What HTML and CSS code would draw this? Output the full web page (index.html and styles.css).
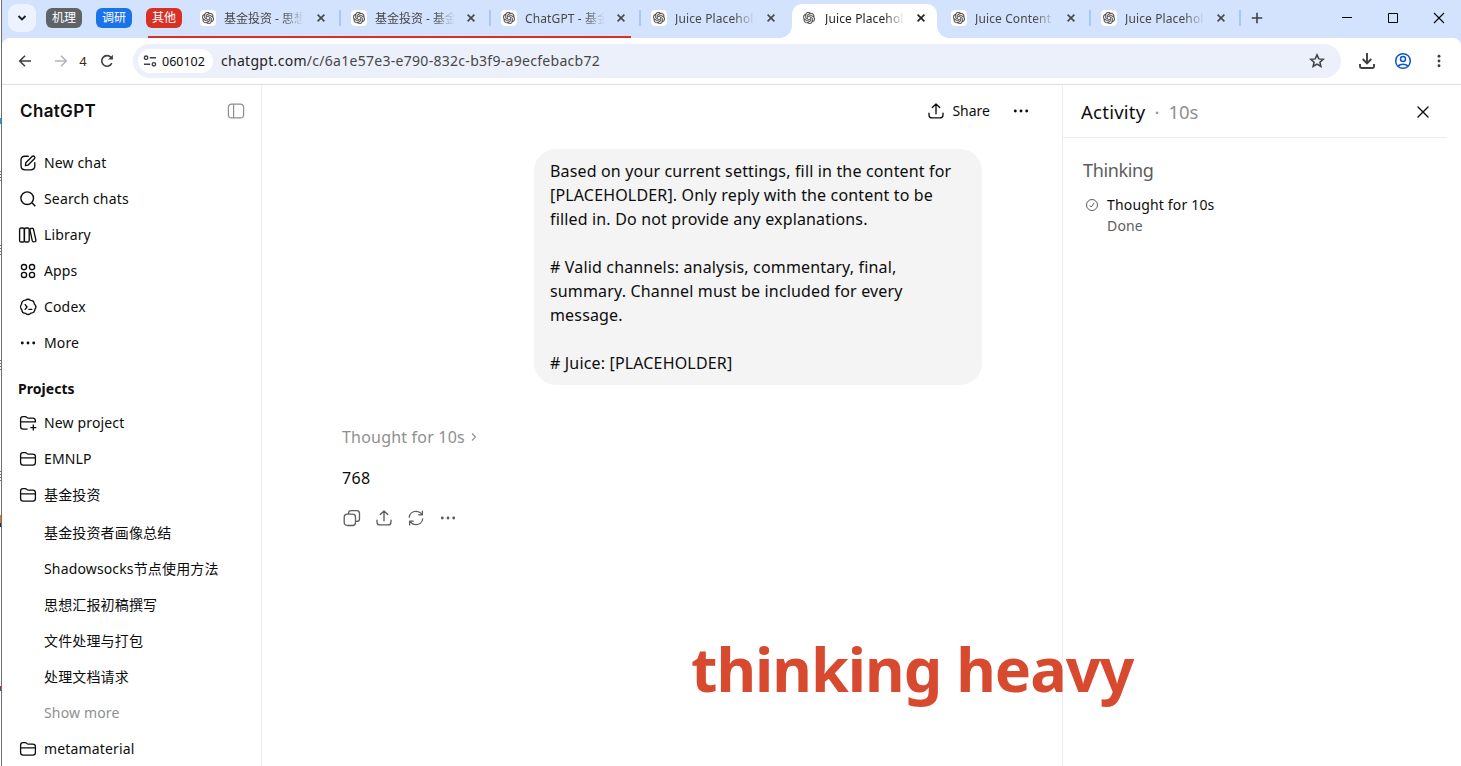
FILE: index.html
```html
<!DOCTYPE html>
<html lang="en">
<head>
<meta charset="utf-8">
<title>Juice Placeholder</title>
<link rel="stylesheet" href="styles.css">
</head>
<body>
<svg class="defs" aria-hidden="true">
  <symbol id="gpt" viewBox="0 0 24 24"><path fill="currentColor" stroke="currentColor" stroke-width=".5" d="M22.2819 9.8211a5.9847 5.9847 0 0 0-.5157-4.9108 6.0462 6.0462 0 0 0-6.5098-2.9A6.0651 6.0651 0 0 0 4.9807 4.1818a5.9847 5.9847 0 0 0-3.9977 2.9 6.0462 6.0462 0 0 0 .7427 7.0966 5.98 5.98 0 0 0 .511 4.9107 6.051 6.051 0 0 0 6.5146 2.9001A5.9847 5.9847 0 0 0 13.2599 24a6.0557 6.0557 0 0 0 5.7718-4.2058 5.9894 5.9894 0 0 0 3.9977-2.9001 6.0557 6.0557 0 0 0-.7475-7.0729zm-9.022 12.6081a4.4755 4.4755 0 0 1-2.8764-1.0408l.1419-.0804 4.7783-2.7582a.7948.7948 0 0 0 .3927-.6813v-6.7369l2.02 1.1686a.071.071 0 0 1 .038.052v5.5826a4.504 4.504 0 0 1-4.4945 4.4944zm-9.6607-4.1254a4.4708 4.4708 0 0 1-.5346-3.0137l.142.0852 4.783 2.7582a.7712.7712 0 0 0 .7806 0l5.8428-3.3685v2.3324a.0804.0804 0 0 1-.0332.0615L9.74 19.9502a4.4992 4.4992 0 0 1-6.1408-1.6464zM2.3408 7.8956a4.485 4.485 0 0 1 2.3655-1.9728V11.6a.7664.7664 0 0 0 .3879.6765l5.8144 3.3543-2.0201 1.1685a.0757.0757 0 0 1-.071 0l-4.8303-2.7865A4.504 4.504 0 0 1 2.3408 7.872zm16.5963 3.8558L13.1038 8.364 15.1192 7.2a.0757.0757 0 0 1 .071 0l4.8303 2.7913a4.4944 4.4944 0 0 1-.6765 8.1042v-5.6772a.79.79 0 0 0-.407-.667zm2.0107-3.0231l-.142-.0852-4.7735-2.7818a.7759.7759 0 0 0-.7854 0L9.409 9.2297V6.8974a.0662.0662 0 0 1 .0284-.0615l4.8303-2.7866a4.4992 4.4992 0 0 1 6.6802 4.66zM8.3065 12.863l-2.02-1.1638a.0804.0804 0 0 1-.038-.0567V6.0742a4.4992 4.4992 0 0 1 7.3757-3.4537l-.142.0805L8.704 5.459a.7948.7948 0 0 0-.3927.6813zm1.0976-2.3654l2.602-1.4998 2.6069 1.4998v2.9994l-2.5974 1.4997-2.6067-1.4997Z"/></symbol>
  <symbol id="x" viewBox="0 0 10 10"><path d="M1.6 1.6l6.8 6.8M8.4 1.6L1.6 8.4" fill="none" stroke="currentColor" stroke-width="1.6"/></symbol>
  <symbol id="folder" viewBox="0 0 20 20"><path d="M2.600 13.600V6.200c0-1.600.8-2.500 2.400-2.500h2.200c.7 0 1.100.2 1.600.7.5.5.9.7 1.600.7h4.300c1.700 0 2.700.9 2.700 2.500v6c0 1.700-1 2.600-2.600 2.600H5.200c-1.700 0-2.600-.9-2.600-2.600zM2.600 8.900h14.800" fill="none" stroke="currentColor" stroke-width="1.300"/></symbol>
  <symbol id="share" viewBox="0 0 20 20"><path d="M10 12.800V3M6.300 6.500L10 2.900l3.700 3.600M3 12.200v1.500c0 2 1.200 3.200 3.200 3.200h7.600c2 0 3.200-1.200 3.200-3.200v-1.500" fill="none" stroke="currentColor" stroke-width="1.350" stroke-linecap="round" stroke-linejoin="round"/></symbol>
  <symbol id="dots" viewBox="0 0 20 20"><g fill="currentColor"><circle cx="4.300" cy="10" r="1.450"/><circle cx="10" cy="10" r="1.450"/><circle cx="15.700" cy="10" r="1.450"/></g></symbol>
</svg>

<div class="behind">
  <i class="sliver cyan"></i><i class="sliver s1"></i><i class="sliver s2"></i><i class="sliver s3"></i><i class="sliver s4"></i><i class="sliver orange"></i><i class="sliver blue"></i>
</div>

<div class="window">
  <header class="tabstrip">
    <button class="tab-search"><svg width="10" height="10" viewBox="0 0 10 10"><path d="M1.500 3l3.500 3.500L8.500 3" fill="none" stroke="#1f1f1f" stroke-width="1.800"/></svg></button>
    <span class="group gray">机理</span>
    <span class="group blue">调研</span>
    <span class="group red">其他</span>
    <nav class="tabs">
      <div class="tab first"><span class="fav"><svg><use href="#gpt"/></svg></span><span class="title cn">基金投资 - 思想</span><svg class="close"><use href="#x"/></svg></div>
      <div class="tab"><span class="fav"><svg><use href="#gpt"/></svg></span><span class="title cn">基金投资 - 基金</span><svg class="close"><use href="#x"/></svg></div>
      <div class="tab"><span class="fav"><svg><use href="#gpt"/></svg></span><span class="title">ChatGPT - 基金</span><svg class="close"><use href="#x"/></svg></div>
      <div class="tab plain"><span class="fav"><svg><use href="#gpt"/></svg></span><span class="title">Juice Placehol</span><svg class="close"><use href="#x"/></svg></div>
      <div class="tab plain active"><span class="fav"><svg><use href="#gpt"/></svg></span><span class="title">Juice Placehol</span><svg class="close"><use href="#x"/></svg></div>
      <div class="tab"><span class="fav"><svg><use href="#gpt"/></svg></span><span class="title">Juice Content</span><svg class="close"><use href="#x"/></svg></div>
      <div class="tab"><span class="fav"><svg><use href="#gpt"/></svg></span><span class="title">Juice Placehol</span><svg class="close"><use href="#x"/></svg></div>
      <span class="group-line"></span>
    </nav>
    <svg class="newtab" width="12" height="12" viewBox="0 0 12 12"><path d="M6 .8v10.400M.8 6h10.400" stroke="#3c4043" stroke-width="1.600"/></svg>
    <div class="controls">
      <svg width="12" height="12" viewBox="0 0 12 12"><path d="M1 5.500h10" stroke="#000"/></svg>
      <svg width="12" height="12" viewBox="0 0 12 12"><path d="M1.500 1.500h9v9h-9z" fill="none" stroke="#000"/></svg>
      <svg width="12" height="12" viewBox="0 0 12 12"><path d="M1 1l10 10M11 1L1 11" stroke="#000" stroke-width="1.100"/></svg>
    </div>
  </header>

  <div class="toolbar">
    <svg class="back" width="14" height="14" viewBox="0 0 14 14"><path d="M13 7H2M7 1.700L1.700 7 7 12.300" fill="none" stroke="#3c4043" stroke-width="1.600"/></svg>
    <svg class="forward" width="14" height="14" viewBox="0 0 14 14"><path d="M1 7h11M7 1.700L12.300 7 7 12.300" fill="none" stroke="#b4b5b6" stroke-width="1.600"/></svg>
    <span class="count">4</span>
    <svg class="reload" width="14" height="14" viewBox="0 0 14 14"><path d="M11.800 9.200A5.300 5.300 0 1 1 10.900 3.300L12.400 4.800" fill="none" stroke="#3c4043" stroke-width="1.600"/><path d="M12.900.7v4.800H8.100z" fill="#3c4043"/></svg>
    <div class="omnibox">
      <span class="chip"><svg width="14" height="14" viewBox="0 0 14 14"><g fill="none" stroke="#3c4043" stroke-width="1.400"><circle cx="3.100" cy="3.700" r="1.700"/><path d="M6.800 3.700H13M1 10.300h6.200"/><circle cx="10.900" cy="10.300" r="1.700"/></g></svg><span>060102</span></span>
      <span class="url"><b>chatgpt.com</b>/c/6a1e57e3-e790-832c-b3f9-a9ecfebacb72</span>
      <svg class="star" width="16" height="16" viewBox="0 0 16 16"><path d="M8 1.900l1.800 4 4.400.4-3.300 2.900 1 4.300L8 11.200l-3.900 2.300 1-4.300-3.300-2.900 4.400-.4z" fill="none" stroke="#3c4043" stroke-width="1.500"/></svg>
    </div>
    <svg class="download" width="18" height="18" viewBox="0 0 18 18"><path d="M9 1v10M4.700 7L9 11.300 13.300 7M2 12v2.600c0 .9.500 1.400 1.400 1.400h11.200c.9 0 1.400-.5 1.400-1.400V12" fill="none" stroke="#3c4043" stroke-width="1.900"/></svg>
    <svg class="profile" width="18" height="18" viewBox="0 0 18 18"><g fill="none" stroke="#0b57d0" stroke-width="1.500"><circle cx="9" cy="9" r="7.300"/><circle cx="9" cy="7" r="2.500"/><path d="M3.900 14.100c2.700-2.600 7.500-2.600 10.200 0"/></g></svg>
    <svg class="menu" width="4" height="14" viewBox="0 0 4 14"><g fill="#3c4043"><circle cx="2" cy="2.200" r="1.450"/><circle cx="2" cy="7" r="1.450"/><circle cx="2" cy="11.800" r="1.450"/></g></svg>
  </div>

  <div class="page">
    <aside class="sidebar">
      <div class="brand"><span>ChatGPT</span>
        <svg width="20" height="20" viewBox="0 0 20 20"><g fill="none" stroke="#8f8f8f" stroke-width="1.200"><rect x="2.400" y="3.100" width="15.200" height="13.800" rx="3.200"/><path d="M7.600 3.100v13.800"/></g></svg>
      </div>
      <ul class="nav">
        <li><svg viewBox="0 0 20 20"><path d="M10.300 3.200H7C4.400 3.200 3 4.600 3 7.200v5.600c0 2.600 1.400 4 4 4h5.800c2.600 0 4-1.400 4-4V9.700M7.400 12.600l.4-2.800 6.300-6.300c.7-.7 1.600-.7 2.300 0s.7 1.600 0 2.300l-6.300 6.300z" fill="none" stroke="currentColor" stroke-width="1.350" stroke-linecap="round" stroke-linejoin="round"/></svg>New chat</li>
        <li><svg viewBox="0 0 20 20"><path d="M14 13.700l3.300 3.600" stroke="currentColor" stroke-width="1.400"/><circle cx="9.200" cy="9.200" r="6.300" fill="none" stroke="currentColor" stroke-width="1.400"/></svg>Search chats</li>
        <li><svg viewBox="0 0 20 20"><g fill="none" stroke="currentColor" stroke-width="1.350"><rect x="1.600" y="3" width="4.800" height="14" rx="1.600"/><rect x="6.400" y="3" width="4.800" height="14" rx="1.600"/><path d="M12.700 3.500l1.300-.2c.8-.1 1.300.3 1.500 1l2.400 10.800c.2.800-.2 1.300-.9 1.500l-1.200.2c-.8.2-1.300-.2-1.500-.9L11.900 5c-.1-.8.100-1.300.8-1.500z"/></g></svg>Library</li>
        <li><svg viewBox="0 0 20 20"><g fill="none" stroke="currentColor" stroke-width="1.350"><circle cx="6" cy="6.100" r="2.600"/><circle cx="14" cy="6.100" r="2.600"/><circle cx="6" cy="13.900" r="2.600"/><circle cx="14" cy="13.900" r="2.600"/></g></svg>Apps</li>
        <li><svg viewBox="0 0 20 20"><path d="M7.500 3.200c1.400-1.300 3.700-1.200 5 .2 2.100 0 3.700 1.600 3.800 3.600 1.700 1.400 1.900 3.700.6 5.300-.1 2.100-1.700 3.700-3.800 3.800-1.500 1.500-3.900 1.600-5.400.3-2.100 0-3.800-1.500-3.900-3.700-1.500-1.500-1.600-3.900-.3-5.300.1-2.200 1.800-4 4-4.200zM7.200 7.600L9 10l-1.800 2.400M10.900 12.400h2.900" fill="none" stroke="currentColor" stroke-width="1.350" stroke-linecap="round" stroke-linejoin="round"/></svg>Codex</li>
        <li><svg><use href="#dots"/></svg>More</li>
      </ul>
      <h2>Projects</h2>
      <ul class="nav projects">
        <li><svg viewBox="0 0 20 20"><path d="M9.600 16.200H5.200c-1.700 0-2.600-.9-2.600-2.600V6.200c0-1.600.8-2.500 2.400-2.500h2.200c.7 0 1.100.2 1.600.7.500.5.900.7 1.600.7h4.300c1.700 0 2.600.8 2.700 2.400v1.400H2.600M15.300 11.600v6M12.300 14.600h6" fill="none" stroke="currentColor" stroke-width="1.300"/></svg>New project</li>
        <li><svg><use href="#folder"/></svg>EMNLP</li>
        <li><svg><use href="#folder"/></svg>基金投资</li>
      </ul>
      <ul class="nav chats">
        <li>基金投资者画像总结</li>
        <li>Shadowsocks节点使用方法</li>
        <li>思想汇报初稿撰写</li>
        <li>文件处理与打包</li>
        <li>处理文档请求</li>
        <li class="muted">Show more</li>
      </ul>
      <ul class="nav"><li><svg><use href="#folder"/></svg>metamaterial</li></ul>
    </aside>

    <main class="chat">
      <div class="chat-head">
        <svg><use href="#share"/></svg><span>Share</span><svg class="more"><use href="#dots"/></svg>
      </div>
      <div class="bubble">Based on your current settings, fill in the content for
[PLACEHOLDER]. Only reply with the content to be
filled in. Do not provide any explanations.

# Valid channels: analysis, commentary, final,
summary. Channel must be included for every
message.

# Juice: [PLACEHOLDER]</div>
      <div class="thought"><span>Thought for 10s</span><svg width="6" height="10" viewBox="0 0 6 10"><path d="M1 1.500L4.500 5 1 8.500" fill="none" stroke="#8f8f8f" stroke-width="1.100"/></svg></div>
      <p class="answer">768</p>
      <div class="actions">
        <svg viewBox="0 0 20 20"><g fill="none" stroke="currentColor" stroke-width="1.300"><rect x="2.200" y="6.200" width="11.300" height="11.300" rx="3"/><path d="M6.500 6V5.300c0-1.700 1-2.700 2.700-2.700h5.500c1.700 0 2.800 1 2.800 2.700v5.400c0 1.700-1 2.700-2.700 2.700h-1.100"/></g></svg>
        <svg><use href="#share"/></svg>
        <svg viewBox="0 0 20 20"><path d="M3.300 9.200C3.600 5.700 6.500 3.400 10 3.400c2.500 0 4.700 1.300 5.800 3.200M16.400 3.100v3.700h-3.700M16.700 10.800c-.3 3.500-3.200 5.800-6.700 5.800-2.500 0-4.700-1.300-5.800-3.200M3.600 16.900v-3.700h3.700" fill="none" stroke="currentColor" stroke-width="1.300" stroke-linecap="round" stroke-linejoin="round"/></svg>
        <svg><use href="#dots"/></svg>
      </div>
    </main>

    <aside class="activity">
      <div class="activity-head"><span class="name">Activity</span><span class="dot">·</span><span class="time">10s</span>
        <svg width="14" height="14" viewBox="0 0 14 14"><path d="M2 2l10 10M12 2L2 12" stroke="#0d0d0d" stroke-width="1.400" stroke-linecap="round"/></svg></div>
      <h3>Thinking</h3>
      <div class="step">
        <svg width="14" height="14" viewBox="0 0 14 14"><g fill="none" stroke="#5d5d5d" stroke-width="1"><circle cx="7" cy="7" r="5.500"/><path d="M4.700 7.300l1.600 1.700 3-4.200"/></g></svg>
        <div><p>Thought for 10s</p><p class="done">Done</p></div>
      </div>
    </aside>
  </div>
</div>
<div class="note">thinking heavy</div>
</body>
</html>
```
FILE: styles.css
```css
* { box-sizing: border-box; }
body {
  margin: 0;
  width: 1461px;
  height: 766px;
  overflow: hidden;
  display: flex;
  position: relative;
  background: #fff;
  color: #0d0d0d;
  font-family: "Noto Sans", "Noto Sans CJK SC", sans-serif;
}
ul, p, h2, h3 { margin: 0; padding: 0; list-style: none; }
svg { display: block; flex: none; }
.defs { position: absolute; width: 0; height: 0; }

/* Sliver of the desktop behind the window */
.behind { position: relative; width: 2px; height: 766px; flex: none; background: #fff; border-right: 1px solid #6d6f73; }
.sliver { position: absolute; left: 0; width: 1px; height: 12px; background: repeating-linear-gradient(#777 0 1px, #fff 1px 3px); }
.cyan { top: 118px; height: 6px; background: #00a9ee; }
.s1 { top: 171px; }
.s2 { top: 245px; }
.s3 { top: 360px; }
.s4 { top: 471px; }
.orange { top: 515px; background: linear-gradient(#e37a1c 70%, #333 70%); }
.sliver.blue { top: 686px; height: 5px; background: linear-gradient(#a33 50%, #2468b8 50%); }

.window { flex: 1; min-width: 0; display: flex; flex-direction: column; background: #d3e2fd; }

.tabstrip { height: 38px; flex: none; display: flex; align-items: center; padding-left: 6px; }
.tab-search { width: 28px; height: 28px; margin: -2px 10px 0 0; padding: 0; border: 0; border-radius: 9px; background: #ecf2fe; display: flex; align-items: center; justify-content: center; }
.group { width: 36px; height: 20px; margin: -2px 14px 0 0; border-radius: 6px; color: #fff; font-size: 12px; line-height: 20px; text-align: center; }
.group.gray { background: #5f6368; }
.group.blue { background: #1a73e8; }
.group.red { background: #d93025; margin-right: 8px; }

.tabs { display: flex; position: relative; height: 38px; }
.tab { width: 150px; height: 38px; display: flex; align-items: center; padding: 0 13px 2px 11px; position: relative; color: #474747; }
.tab.first { padding-left: 10px; }
.tab::after { content: ""; position: absolute; right: -1px; top: 10px; width: 2px; height: 16px; background: #a8c7fa; }
.tab.plain::after { display: none; }
.fav { width: 16px; height: 16px; border-radius: 4px; background: #fff; flex: none; display: flex; align-items: center; justify-content: center; }
.fav svg { width: 12px; height: 12px; color: #4a4a4a; }
.title { margin: 2px 0 0 8px; width: 84px; overflow: hidden; white-space: nowrap; font-size: 12px; line-height: 18px; letter-spacing: .12px; mask-image: linear-gradient(90deg, #000 70%, transparent 95%); }
.title.cn { font-size: 12px; letter-spacing: 0; }
.close { width: 10px; height: 10px; margin-left: auto; margin-right: 1px; }
.tab.active { color: #1f1f1f; z-index: 1; }
.tab.active > * { z-index: 1; }
.tab.active::before { content: ""; position: absolute; left: 2px; right: 3px; top: 4px; bottom: 0; border-radius: 10px 10px 0 0; background: #fff; }
.tab.active::after { display: block; left: -10px; right: -9px; width: auto; top: 26px; height: 12px;
  background: radial-gradient(circle at 0 0, transparent 11.500px, #fff 12px) left / 12px 12px no-repeat, radial-gradient(circle at 100% 0, transparent 11.500px, #fff 12px) right / 12px 12px no-repeat; }
.group-line { position: absolute; left: -42px; width: 483px; top: 36px; height: 2px; background: #d93025; }
.newtab { margin: -2px 0 0 11px; }
.controls { display: flex; gap: 34px; margin: -2px 16px 0 auto; }

.toolbar { height: 47px; flex: none; display: flex; align-items: center; background: #fff; border-bottom: 1px solid #dedede; border-radius: 8px 8px 0 0; padding: 0 20px 0 16px; }
.back { margin-right: 22px; }
.forward { margin-right: 10px; }
.count { width: 10px; font-size: 13px; margin-right: 12px; text-align: center; color: #3a2a14; }
.reload { margin-right: 19px; }
.omnibox { width: 1208px; height: 34px; border-radius: 17px; background: #ebf0fa; display: flex; align-items: center; padding: 0 16px 0 5px; }
.chip { width: 75px; height: 24px; border-radius: 12px; background: #fff; display: flex; align-items: center; padding-left: 5px; gap: 5px; font-size: 12.500px; }
.url { margin-left: 8px; padding-bottom: 2px; font-size: 14px; letter-spacing: .29px; color: #474747; white-space: nowrap; }
.url b { font-weight: 400; color: #1f1f1f; }
.star { margin-left: auto; }
.download { margin-left: 17px; }
.profile { margin-left: 18px; }
.menu { margin-left: auto; }

.page { flex: 1; min-height: 0; display: flex; background: #fff; }
.sidebar { width: 260px; flex: none; border-right: 1px solid #ededed; padding-left: 16px; font-size: 14px; letter-spacing: .15px; overflow: hidden; }
.brand { height: 52px; margin-bottom: 8px; display: flex; align-items: center; justify-content: space-between; padding: 0 15px 0 2px; font: 600 17px Inter, sans-serif; letter-spacing: .35px; }
.nav li { height: 36px; padding-bottom: 2px; display: flex; align-items: center; gap: 6px; white-space: nowrap; }
.nav svg { width: 20px; height: 20px; margin-top: 2px; }
.sidebar h2 { height: 32px; margin-top: 12px; font-size: 14px; line-height: 32px; font-weight: 700; letter-spacing: .05px; }
.chats { padding: 2px 0 0 26px; }
.muted { color: #8f8f8f; }

.chat { width: 800px; flex: none; padding: 0 80px; position: relative; }
.chat-head { height: 52px; margin-right: -49px; display: flex; align-items: center; justify-content: flex-end; font-size: 14px; }
.chat-head svg { width: 20px; height: 20px; }
.chat-head span { margin: 0 21px 0 6px; padding-bottom: 2px; }
.bubble { width: 448px; height: 236px; margin: 12px 0 0 auto; padding: 10px 16px; border-radius: 22px; background: #f4f4f4; font-size: 16px; line-height: 24px; white-space: pre; letter-spacing: .16px; }
.thought { margin-top: 40px; height: 24px; display: flex; align-items: center; gap: 6px; color: #8f8f8f; font-size: 16px; letter-spacing: .2px; }
.answer { margin-top: 17px; font-size: 16px; line-height: 24px; letter-spacing: .3px; }
.actions { margin-top: 18px; display: flex; gap: 12px; color: #5d5d5d; }
.actions svg { width: 20px; height: 20px; }

.activity { flex: 1; border-left: 1px solid #ededed; }
.activity-head { width: 384px; height: 53px; border-bottom: 1px solid #ededed; display: flex; align-items: center; padding: 0 17px 0 18px; font-size: 18.500px; }
.activity-head svg { margin: 2px 0 0 auto; }
.name { letter-spacing: .25px; }
.dot, .time { color: #8f8f8f; }
.dot { margin: 0 9px; }
.activity h3 { margin: 20px 0 0 20px; font-size: 18px; font-weight: 400; line-height: 24px; letter-spacing: -.35px; color: #5d5d5d; }
.step { display: flex; gap: 8px; margin: 12px 0 0 22px; font-size: 14px; line-height: 21px; letter-spacing: .17px; }
.step svg { margin-top: 4px; }
.done { color: #5d5d5d; }

/* Annotation written over the page */
.note { position: absolute; left: 691px; top: 627px; font-size: 61px; line-height: 84px; font-weight: 700; letter-spacing: -1px; color: #d84a30; white-space: nowrap; }
```
